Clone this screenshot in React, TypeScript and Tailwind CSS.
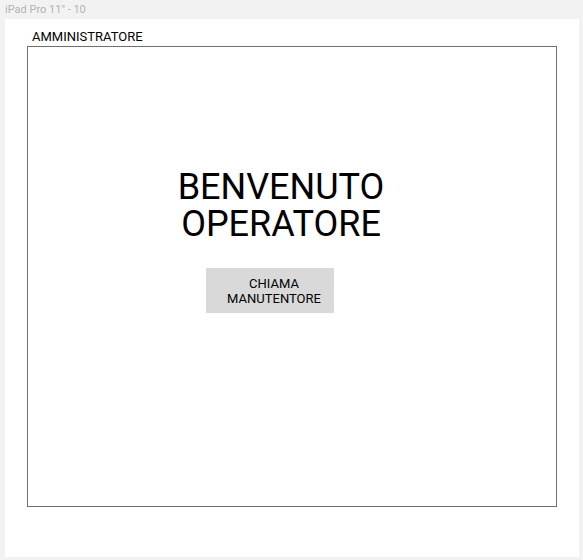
export default function App() {
  return (
    <div className="h-[560px] w-[583px] bg-[#f2f2f2] font-['Roboto',sans-serif] overflow-hidden">
      <div className="h-[19px] pl-[5px] pt-[3px] text-[11px] leading-[13px] text-[#b3b3b3]">
        iPad Pro 11″ - 10
      </div>
      <div className="ml-[5px] h-[538px] w-[574px] bg-white">
        <div className="pl-[27px] pt-[10px] text-[13px] leading-[15px] text-black">
          AMMINISTRATORE
        </div>
        <div className="ml-[22px] mt-[2px] h-[461px] w-[530px] border border-[#707070]">
          <div className="flex flex-col pt-[122px]">
            <h1 className="flex flex-col gap-[1px] pr-[22px] text-center text-[36px] leading-[36px] font-normal text-black">
              <span>BENVENUTO</span>
              <span>OPERATORE</span>
            </h1>
            <button className="ml-[178px] mt-[26px] flex h-[45px] w-[128px] flex-col items-center justify-center bg-[#d9d9d9] pl-[8px] text-[13px] leading-[15px] text-black">
              <span>CHIAMA</span>
              <span>MANUTENTORE</span>
            </button>
          </div>
        </div>
      </div>
    </div>
  );
}
